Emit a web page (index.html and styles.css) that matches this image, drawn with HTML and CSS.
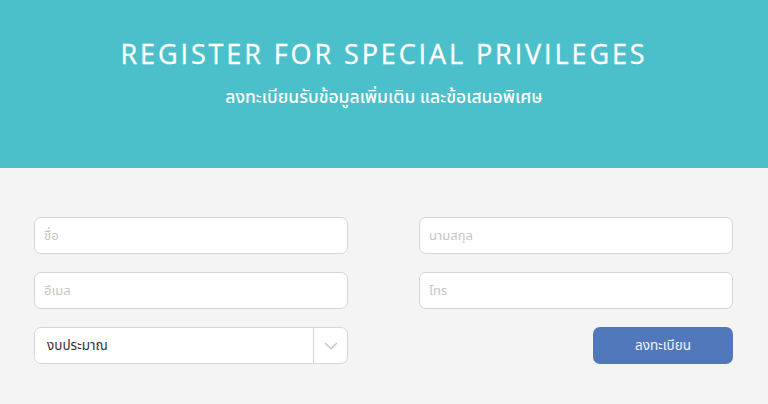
FILE: index.html
```html
<!DOCTYPE html>
<html lang="th">
<head>
<meta charset="utf-8">
<link rel="stylesheet" href="styles.css">
</head>
<body>
<header class="hero">
  <h1 class="hero-title">REGISTER FOR SPECIAL PRIVILEGES</h1>
  <p class="hero-sub">ลงทะเบียนรับข้อมูลเพิ่มเติม และข้อเสนอพิเศษ</p>
</header>
<main class="form-area">
  <form class="form-grid">
    <input class="field" type="text" placeholder="ชื่อ">
    <input class="field" type="text" placeholder="นามสกุล">
    <input class="field" type="text" placeholder="อีเมล">
    <input class="field" type="text" placeholder="โทร">
    <div class="select">
      <span class="select-text">งบประมาณ</span>
      <span class="select-arrow">
        <svg width="14" height="8" viewBox="0 0 14 8"><path d="M1 1 L7 6.5 L13 1" fill="none" stroke="#c4c4c4" stroke-width="1.4"/></svg>
      </span>
    </div>
    <div class="btn-cell"><button class="btn" type="button">ลงทะเบียน</button></div>
  </form>
</main>
</body>
</html>
```
FILE: styles.css
```css
html, body { margin: 0; padding: 0; }
body {
  width: 768px;
  height: 404px;
  overflow: hidden;
  background: #f4f4f4;
  font-family: "Noto Sans Thai", "Noto Sans Thai UI", "Noto Sans", "Open Sans", sans-serif;
}
.hero {
  background: #4bc0ca;
  height: 168px;
  box-sizing: border-box;
  padding-top: 36px;
  text-align: center;
  color: #fff;
}
.hero-title {
  margin: 0;
  font-family: "Open Sans", sans-serif;
  font-weight: 500;
  font-size: 27px;
  letter-spacing: 2.9px;
  line-height: 36px;
  -webkit-text-stroke: 0.35px #fff;
}
.hero-sub {
  margin: 15px 0 0;
  font-size: 17.5px;
  line-height: 22px;
  font-weight: 500;
}
.form-area {
  padding-top: 49px;
}
.form-grid {
  margin: 0 0 0 34px;
  width: 699px;
  display: grid;
  grid-template-columns: 314px 314px;
  column-gap: 71px;
  row-gap: 18px;
}
.field, .select {
  box-sizing: border-box;
  height: 37px;
  border: 1px solid #d6d6d6;
  border-radius: 7px;
  background: #fff;
  font-family: inherit;
  font-size: 13px;
  padding: 0 9px;
  outline: none;
  width: 100%;
}
.field::placeholder { color: #c6c6c6; }
.select {
  display: flex;
  align-items: center;
  padding: 0 0 0 12px;
}
.select-text {
  flex: 1;
  color: #333;
  font-size: 13.5px;
}
.select-arrow {
  width: 33px;
  height: 100%;
  border-left: 1px solid #d6d6d6;
  display: flex;
  align-items: center;
  justify-content: center;
}
.btn-cell {
  display: flex;
  justify-content: flex-end;
}
.btn {
  width: 140px;
  height: 37px;
  border: none;
  border-radius: 7px;
  background: #5178bb;
  color: #f2f4ff;
  font-family: inherit;
  font-size: 13.5px;
  cursor: pointer;
}
```
